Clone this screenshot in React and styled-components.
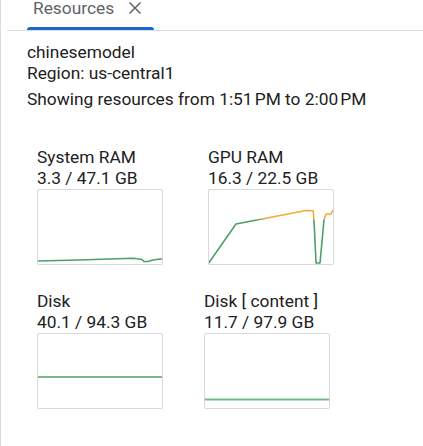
import React from "react";
import styled, { createGlobalStyle } from "styled-components";

const Global = createGlobalStyle`
  html, body { margin: 0; padding: 0; background: #fff; }
  body { font-family: Roboto, "Liberation Sans", sans-serif; color: #212121; }
`;

const Page = styled.div`
  height: 446px;
  border-left: 1px solid #dcdcdc;
  box-sizing: border-box;
  overflow: hidden;
`;

const TabBar = styled.div`
  margin-left: 6px;
  height: 30px;
  border-bottom: 1px solid #dadce0;
  display: flex;
  align-items: flex-start;
  padding-left: 20px;
`;

const Tab = styled.div`
  position: relative;
  height: 30px;
  box-sizing: border-box;
  display: flex;
  align-items: flex-start;
  gap: 14px;
  padding: 0 12px 0 6px;
  color: #5f6368;
  font-size: 17.33px;
  line-height: 16px;
  &::after {
    content: "";
    position: absolute;
    left: 0;
    right: 0;
    bottom: 0;
    height: 3px;
    background: #1967d2;
    border-radius: 3px 3px 0 0;
  }
`;

const CloseIcon = styled.svg`
  width: 14px;
  height: 14px;
  margin-top: 1px;
  flex: none;
`;

const Content = styled.div`
  padding: 11px 0 0 26px;
  font-size: 17.33px;
  line-height: 21px;
`;

const Line = styled.div`
  margin-top: ${(p) => p.$gap || 0}px;
  white-space: nowrap;
`;

const Charts = styled.div`
  margin: 37px 0 0 10px;
  display: flex;
  flex-direction: column;
  gap: 26px;
`;

const ChartRow = styled.div`
  display: flex;
  gap: ${(p) => p.$gap}px;
`;

const Chart = styled.div`
  display: flex;
  flex-direction: column;
  width: 126px;
`;

const Label = styled.div`
  white-space: nowrap;
`;

const Box = styled.div`
  width: 126px;
  height: 76px;
  box-sizing: border-box;
  border: 1px solid #d9d9d9;
  border-radius: 2px;
  overflow: hidden;
`;

const Plot = styled.svg`
  display: block;
  width: 124px;
  height: 74px;
`;

const GREEN = "#4aa067";
const ORANGE = "#f5ac35";

function Graph({ points, threshold, width = 1.6, color = GREEN, id }) {
  const pts = points.map((p) => p.join(",")).join(" ");
  if (threshold == null) {
    return (
      <Plot viewBox="0 0 124 74">
        <polyline points={pts} fill="none" stroke={color} strokeWidth={width} strokeLinejoin="round" />
      </Plot>
    );
  }
  return (
    <Plot viewBox="0 0 124 74">
      <defs>
        <clipPath id={`${id}-hi`}>
          <rect x="0" y="0" width="124" height={threshold} />
        </clipPath>
        <clipPath id={`${id}-lo`}>
          <rect x="0" y={threshold} width="124" height={74 - threshold} />
        </clipPath>
      </defs>
      <polyline points={pts} fill="none" stroke={ORANGE} strokeWidth={width} strokeLinejoin="round" clipPath={`url(#${id}-hi)`} />
      <polyline points={pts} fill="none" stroke={GREEN} strokeWidth={width} strokeLinejoin="round" clipPath={`url(#${id}-lo)`} />
    </Plot>
  );
}

const sysRam = [
  [0, 71], [40, 70], [95, 68.3], [104, 69.5], [106, 71.5], [110, 71.5], [115, 70], [120, 69.3], [124, 69],
];
const gpuRam = [
  [-1, 74], [27, 34], [97, 20.5], [104.3, 20.7], [105.5, 40], [107, 73], [111, 73], [115, 30], [117, 24], [117.5, 24], [122, 24], [124, 20],
];
const disk = [[0, 43], [124, 43]];
const diskContent = [[0, 65.5], [124, 65.5]];

export default function App() {
  return (
    <>
      <Global />
      <Page>
        <TabBar>
          <Tab>
            <span>Resources</span>
            <CloseIcon viewBox="0 0 14 14">
              <path d="M1.5 1.5 L12.5 12.5 M12.5 1.5 L1.5 12.5" stroke="#5f6368" strokeWidth="1.5" fill="none" />
            </CloseIcon>
          </Tab>
        </TabBar>
        <Content>
          <Line>chinesemodel</Line>
          <Line>Region: us-central1</Line>
          <Line $gap={5}>Showing resources from 1:51{"\u202F"}PM to 2:00{"\u202F"}PM</Line>
          <Charts>
            <ChartRow $gap={45}>
              <Chart>
                <Label>System RAM</Label>
                <Label>3.3 / 47.1 GB</Label>
                <Box><Graph points={sysRam} /></Box>
              </Chart>
              <Chart>
                <Label>GPU RAM</Label>
                <Label>16.3 / 22.5 GB</Label>
                <Box><Graph points={gpuRam} threshold={29.2} id="gpu" /></Box>
              </Chart>
            </ChartRow>
            <ChartRow $gap={41}>
              <Chart>
                <Label>Disk</Label>
                <Label>40.1 / 94.3 GB</Label>
                <Box><Graph points={disk} /></Box>
              </Chart>
              <Chart>
                <Label>Disk [ content ]</Label>
                <Label>11.7 / 97.9 GB</Label>
                <Box><Graph points={diskContent} width={2} color="#72b98a" /></Box>
              </Chart>
            </ChartRow>
          </Charts>
        </Content>
      </Page>
    </>
  );
}
